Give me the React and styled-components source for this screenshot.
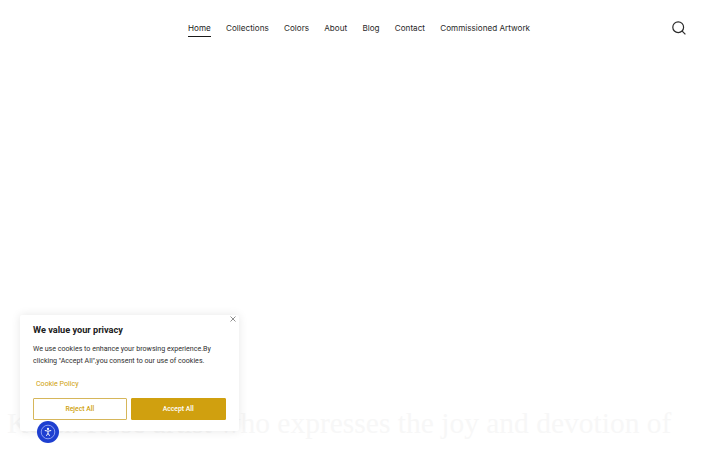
import React from "react";
import styled, { createGlobalStyle } from "styled-components";

const Global = createGlobalStyle`
  html, body { margin: 0; padding: 0; height: 100%; background: #fff; overflow: hidden; }
  body { font-family: Roboto, "Liberation Sans", sans-serif; }
`;
const Page = styled.div`
  width: 720px; height: 450px; overflow: hidden; position: relative; background: #fff;
  display: flex; flex-direction: column;
`;
const Header = styled.header`
  height: 56px; flex: none; display: flex; align-items: flex-start;
  padding: 0 34px 0 188px; box-sizing: border-box;
`;
const Nav = styled.nav`display: flex; gap: 15.25px; flex: 1;`;
const NavLink = styled.a`
  font-family: Inter, sans-serif; font-size: 8.15px; line-height: 12px; color: ${p => (p.$active ? "#1a1a1a" : "#282828")};
  padding: 22px 0 2px; border-bottom: 1px solid ${p => (p.$active ? "#1a1a1a" : "transparent")};
  height: 12px; white-space: nowrap; font-weight: 400;
`;
const SearchBtn = styled.button`
  border: 0; background: none; padding: 0; margin-top: 21px; width: 14px; height: 14px; color: #2a2a2a; display: flex;
`;
const Hero = styled.section`flex: 1; display: flex; flex-direction: column; padding: 347px 7px 0;`;
const HeroTitle = styled.h1`
  margin: 0; font-family: "Liberation Serif", serif; font-weight: 400; font-size: 29.5px; line-height: 40px;
  color: #f7f7f7; width: 690px;
`;
const Cookie = styled.aside`
  position: absolute; left: 20px; top: 315px; width: 219px; height: 116px; box-sizing: border-box; background: #fff;
  box-shadow: 0 0 10px rgba(0,0,0,.1); padding: 9px 13px 0; border-radius: 2px;
`;
const Close = styled.button`
  position: absolute; top: -1px; right: 1px; width: 10px; height: 10px; padding: 0; border: 0; background: none; color: #8f8f8f; display: flex;
`;
const CookieTitle = styled.h2`margin: 0 0 8px; font-size: 9.2px; line-height: 11px; font-weight: 700; color: #212121;`;
const CookieText = styled.p`margin: 0; font-size: 7.1px; line-height: 12px; color: #2f2f2f;`;
const PolicyLink = styled.a`
  display: block; margin: 11px 0 8px 3px; font-size: 7.1px; line-height: 12px; color: #cfa10c;
`;
const Buttons = styled.div`display: flex; gap: 4px;`;
const Btn = styled.button`
  width: ${p => p.$w}px; height: 22px; box-sizing: border-box; font: 500 6.8px Roboto, sans-serif; border-radius: 1px;
  border: ${p => (p.$fill ? "1px solid #d0a00f" : "1.5px solid #d6b65a")}; color: ${p => (p.$fill ? "#fff" : "#cfa10c")}; background: ${p => (p.$fill ? "#d0a00f" : "#fff")};
  padding: 0;
`;
const A11y = styled.button`
  position: absolute; left: 37px; top: 421px; width: 22px; height: 22px; border-radius: 50%; border: 0; padding: 0;
  background: #1e3fd0; display: flex; align-items: center; justify-content: center;
`;

export default function App() {
  const links = ["Home", "Collections", "Colors", "About", "Blog", "Contact", "Commissioned Artwork"];
  return (
    <Page>
      <Global />
      <Header>
        <Nav>
          {links.map((l, i) => <NavLink key={l} $active={i === 0}>{l}</NavLink>)}
        </Nav>
        <SearchBtn aria-label="Search">
          <svg width="14" height="14" viewBox="0 0 14 14" fill="none" stroke="currentColor" strokeWidth="1.2">
            <circle cx="6.2" cy="6.2" r="5.4" />
            <path d="M10.2 10.2 L13.4 13.4" />
          </svg>
        </SearchBtn>
      </Header>
      <Hero>
        <HeroTitle>Keren Rose artist who expresses the joy and devotion of Jewish identity</HeroTitle>
      </Hero>
      <Cookie>
        <Close aria-label="Close">
          <svg width="10" height="10" viewBox="0 0 10 10" stroke="currentColor" strokeWidth="1"><path d="M2.5 2.5 7.5 7.5M7.5 2.5 2.5 7.5" /></svg>
        </Close>
        <CookieTitle>We value your privacy</CookieTitle>
        <CookieText>We use cookies to enhance your browsing experience.By clicking "Accept All",you consent to our use of cookies.</CookieText>
        <PolicyLink>Cookie Policy</PolicyLink>
        <Buttons>
          <Btn $w={94}>Reject All</Btn>
          <Btn $w={96} $fill>Accept All</Btn>
        </Buttons>
      </Cookie>
      <A11y aria-label="Accessibility">
        <svg width="16" height="16" viewBox="0 0 16 16" fill="none" stroke="#fff">
          <circle cx="8" cy="8" r="6.8" strokeWidth="0.7" stroke="#b9c6ff" />
          <circle cx="8" cy="4.9" r="1.1" fill="#fff" stroke="none" />
          <path d="M4.8 6.5 8 7.2 11.2 6.5M8 7.2V9.2M8 9.2 6.4 11.8M8 9.2 9.6 11.8" strokeWidth="1" />
        </svg>
      </A11y>
    </Page>
  );
}
